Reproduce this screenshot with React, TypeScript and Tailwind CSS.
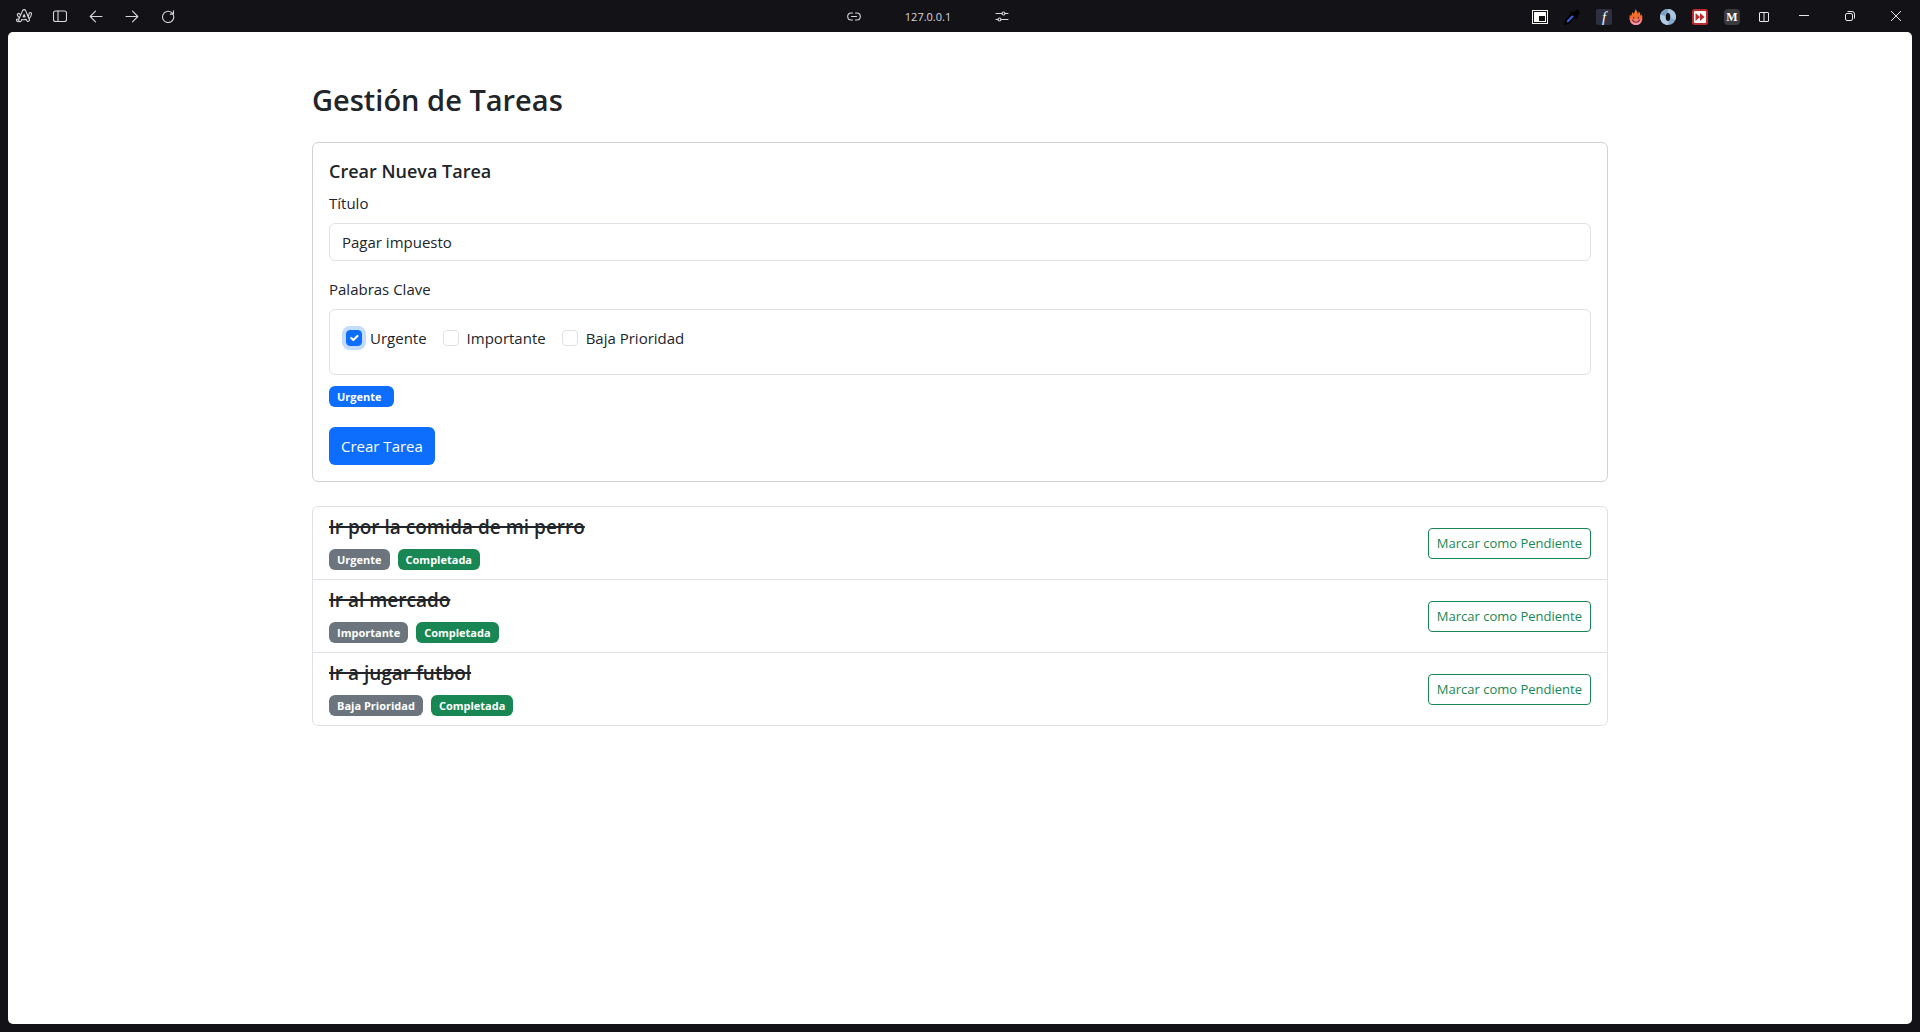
import { useState } from "react";
import type { ReactNode } from "react";

const KEYWORDS = ["Urgente", "Importante", "Baja Prioridad"];

const INITIAL_TASKS = [
  { id: 1, title: "Ir por la comida de mi perro", keyword: "Urgente", done: true },
  { id: 2, title: "Ir al mercado", keyword: "Importante", done: true },
  { id: 3, title: "Ir a jugar futbol", keyword: "Baja Prioridad", done: true },
];

function BarButton({ label, className = "", children }: { label: string; className?: string; children: ReactNode }) {
  return (
    <button type="button" aria-label={label} className={`flex h-8 shrink-0 items-center justify-center ${className}`}>
      {children}
    </button>
  );
}

function ArcLogo() {
  return (
    <svg width="16" height="14" viewBox="0 0 16 14" fill="none" stroke="#d8d7dc" strokeWidth="1.1" strokeLinejoin="round" strokeLinecap="round">
      <path d="M6.600 1.600C7.200.3 9 .3 9.600 1.600l3.700 8.700c.8 2-1.700 3-2.600 1.300l-.6-1.300c-1.300.6-2.800.6-4.200.1l-.6 1.300c-1 1.700-3.400.6-2.600-1.300z" />
      <path d="M3.600 8.600C2.600 7.900 2.100 7.300 1.600 6.600.5 4.900 2.800 3.600 3.900 5.200l.7.900M12.300 7.300c.5-1 .7-1.800.8-2.700.3-1.700 2.600-1.300 2.400.4-.3 1.800-1 3.200-2.200 4.500" />
      <path d="M7.200 7.700 8.100 5.500l1 2.300c-.7.200-1.300.2-1.900-.1zM2.700 10.300c-.8-.3-1.400-.7-2 .1-.6 1 .2 2.300 1.600 2.300" />
    </svg>
  );
}

function BrowserBar() {
  const line = { fill: "none", stroke: "#d8d7dc", strokeWidth: 1.1, strokeLinecap: "round", strokeLinejoin: "round" } as const;
  return (
    <header className="grid h-8 grid-cols-[1fr_auto_1fr] items-center">
      <nav aria-label="Navegación" className="flex items-center pl-1.5">
        <BarButton label="Arc" className="w-9"><ArcLogo /></BarButton>
        <BarButton label="Barra lateral" className="w-9">
          <svg width="14" height="12" viewBox="0 0 14 12" {...line}>
            <rect x=".5" y="1" width="13" height="10.500" rx="2" />
            <path d="M5 1v10.500" />
          </svg>
        </BarButton>
        <BarButton label="Atrás" className="w-9">
          <svg width="14" height="14" viewBox="0 0 14 14" {...line}><path d="M13 7.500H1.500M6.500 2.200 1.200 7.500l5.300 5.300" /></svg>
        </BarButton>
        <BarButton label="Adelante" className="w-9">
          <svg width="14" height="14" viewBox="0 0 14 14" {...line}><path d="M1 7.500h11.500M7.500 2.200l5.300 5.300-5.300 5.300" /></svg>
        </BarButton>
        <BarButton label="Recargar" className="w-9">
          <svg width="14" height="14" viewBox="0 0 14 14" {...line}><path d="M12.500 6.300A5.600 5.600 0 1 1 10.800 3.700l1.500 1.200M12.500 1.800v3.300H9.200" /></svg>
        </BarButton>
      </nav>

      <div className="flex items-center pr-16">
        <BarButton label="Copiar enlace" className="w-4">
          <svg width="14" height="10" viewBox="0 0 14 10" {...line}><path d="M5.500 2h-1.300a3.300 3.300 0 0 0 0 7h1.300M8.500 2h1.300a3.300 3.300 0 0 1 0 7H8.500M4.500 5.500h5" /></svg>
        </BarButton>
        <span className="w-[132px] pt-0.5 text-center text-[11px] font-medium text-[#d8d7dc]">127.0.0.1</span>
        <BarButton label="Ajustes del sitio" className="w-4">
          <svg width="14" height="12" viewBox="0 0 14 12" {...line}>
            <path d="M1 3.500h6M10 3.500h3M1 9.500h2M6 9.500h7" />
            <circle cx="8.500" cy="3.500" r="1.500" />
            <circle cx="4.500" cy="9.500" r="1.500" />
          </svg>
        </BarButton>
      </div>

      <div className="flex items-center justify-end">
        <BarButton label="Imagen en imagen" className="w-8 pt-0.5">
          <svg width="16" height="14" viewBox="0 0 16 14">
            <rect width="16" height="14" fill="#f5f5f5" />
            <rect x="1.500" y="1.500" width="13" height="11" fill="#fff" stroke="#111" />
            <rect x="7" y="6" width="6" height="5" fill="#111" />
          </svg>
        </BarButton>
        <BarButton label="Cuentagotas" className="w-8 pt-0.5">
          <svg width="16" height="16" viewBox="0 0 16 16">
            <path d="M8.500 4.500 2.500 10.500 1.200 14.800l4.300-1.300 6-6z" fill="#3c5bd0" stroke="#000" strokeWidth="1.800" />
            <path d="M7.500 3.500 12.500 8.500M9.500 5 12 2.300c1.500-1.500 3.400.5 2 2L11.500 7z" fill="#000" stroke="#000" strokeWidth="2.500" strokeLinecap="round" />
          </svg>
        </BarButton>
        <BarButton label="Fuentes" className="w-8 pt-0.5">
          <span className="flex size-4 items-center justify-center rounded-xs bg-[#2e3040] font-['Liberation_Serif',serif] text-[15px] leading-none text-white italic">f</span>
        </BarButton>
        <BarButton label="Llama" className="w-8 pt-0.5">
          <svg width="14" height="16" viewBox="0 0 14 16">
            <defs>
              <linearGradient id="flame" x1="0" y1="0" x2="0" y2="1">
                <stop offset="0" stopColor="#ff8a1c" />
                <stop offset=".5" stopColor="#f2662f" />
                <stop offset="1" stopColor="#ff9fc0" />
              </linearGradient>
            </defs>
            <path d="M6.500 0C8 2 8.500 3.500 8.800 5c.7-.6 1-1.500 1-2.500C11.500 4 11.300 5.500 11.700 7c.5-.4.8-1 .9-1.700C13.500 7 13.500 9 13.200 11c-.6 3-3 5-6.200 5S1.200 14 .7 11C.4 9 .5 7 1 5.500c.4.800.8 1.200 1.300 1.500C2.400 5.500 3 4 4 3c0 .8.200 1.500.6 2C5.500 3.600 6.300 2 6.500 0z" fill="url(#flame)" />
            <path d="M4.700 8.300v1M9.300 8.300v1M3.500 11c1.500 3 5.500 3 7 0" fill="none" stroke="#6b2a3d" strokeWidth="1.100" strokeLinecap="round" />
          </svg>
        </BarButton>
        <BarButton label="Anillo" className="w-8 pt-0.5">
          <svg width="16" height="16" viewBox="0 0 16 16">
            <circle cx="8" cy="8" r="8" fill="#86a9c9" />
            <path d="M8 0a8 8 0 0 1 7.500 10.500L10.500 9C11 6 10 4 7 3.500z" fill="#a9c6de" />
            <path d="M8 16A8 8 0 0 1 .5 5.500L5.500 7C5 10 6 12 9 12.500z" fill="#b2cce0" />
            <path d="M8 0A8 8 0 0 0 .5 5.500l5 1.500C6 5 7 4 8 4z" fill="#7fa3c4" />
            <ellipse cx="8" cy="8" rx="2.200" ry="4" fill="#131217" />
          </svg>
        </BarButton>
        <BarButton label="Avance rápido" className="w-8 pt-0.5">
          <svg width="16" height="16" viewBox="0 0 16 16">
            <rect width="16" height="16" rx="2.500" fill="#bf2a2c" />
            <rect x="2" y="2" width="12" height="12" rx="1" fill="#fff" />
            <path d="m3.500 4 4.500 4-4.500 4zM8 4l4.500 4L8 12z" fill="#bf2a2c" />
          </svg>
        </BarButton>
        <BarButton label="Medium" className="w-8 pt-0.5">
          <span className="flex size-4 items-center justify-center rounded-sm bg-[#3b3b3e] font-['Liberation_Serif',serif] text-[12px] leading-none font-bold text-white">M</span>
        </BarButton>
        <BarButton label="Vista dividida" className="w-8 pt-0.5">
          <svg width="10" height="10" viewBox="0 0 10 10" fill="none" stroke="#e8e8ea"><rect x=".5" y=".5" width="9" height="9" rx=".5" /><path d="M5 0v10" /></svg>
        </BarButton>
        <BarButton label="Minimizar" className="w-12">
          <svg width="10" height="10" viewBox="0 0 10 10" fill="none" stroke="#e8e8ea"><path d="M0 4.500h10" /></svg>
        </BarButton>
        <BarButton label="Restaurar" className="w-11">
          <svg width="10" height="10" viewBox="0 0 10 10" fill="none" stroke="#e8e8ea"><rect x=".5" y="2.500" width="7" height="7" rx="1.500" /><path d="M2.500.5H7A2.500 2.500 0 0 1 9.500 3v4.500" /></svg>
        </BarButton>
        <BarButton label="Cerrar" className="w-12">
          <svg width="10" height="10" viewBox="0 0 10 10" fill="none" stroke="#e8e8ea"><path d="m0 0 10 10M10 0 0 10" /></svg>
        </BarButton>
      </div>
    </header>
  );
}

function Badge({ className, children }: { className: string; children: ReactNode }) {
  return <span className={`inline-block h-[21px] rounded-md text-[11px] leading-[22px] font-bold text-white ${className}`}>{children}</span>;
}

function KeywordCheck({ name, checked, onChange }: { name: string; checked: boolean; onChange: () => void }) {
  return (
    <label className="flex h-6 items-center gap-2">
      <span className="grid size-4 place-items-center">
        <input
          type="checkbox"
          checked={checked}
          onChange={onChange}
          className="col-start-1 row-start-1 size-4 appearance-none rounded border border-[#dee2e6] bg-white checked:border-[#0d6efd] checked:bg-[#0d6efd] checked:ring-4 checked:ring-[#0d6efd]/25"
        />
        {checked && (
          <svg viewBox="0 0 20 20" className="pointer-events-none col-start-1 row-start-1 size-3.5" fill="none" stroke="#fff" strokeWidth="3" strokeLinecap="round" strokeLinejoin="round">
            <path d="m6 10 3 3 6-6" />
          </svg>
        )}
      </span>
      {name}
    </label>
  );
}

export default function App() {
  const [title, setTitle] = useState("Pagar impuesto");
  const [selected, setSelected] = useState<string[]>(["Urgente"]);
  const [tasks, setTasks] = useState(INITIAL_TASKS);

  const toggleKeyword = (name: string) =>
    setSelected((list) => (list.includes(name) ? list.filter((k) => k !== name) : [...list, name]));
  const toggleTask = (id: number) =>
    setTasks((list) => list.map((t) => (t.id === id ? { ...t, done: !t.done } : t)));

  return (
    <div className="flex min-h-screen flex-col bg-[#131217] pb-2 font-['Open_Sans',sans-serif] text-[15px] leading-6 text-[#212529]">
      <BrowserBar />
      <main className="mx-2 grow rounded-[5px] bg-white">
        <div className="mx-auto max-w-[1320px] px-3 pt-12">
          <h1 className="mb-[22px] text-[29px] leading-10 font-semibold">Gestión de Tareas</h1>

          <form onSubmit={(e) => e.preventDefault()} className="mb-6 rounded-md border border-[#d2d2d2] p-4">
            <h2 className="mb-2 text-[18px] leading-6 font-semibold">Crear Nueva Tarea</h2>
            <label htmlFor="title" className="mb-2 block">Título</label>
            <input
              id="title"
              type="text"
              value={title}
              onChange={(e) => setTitle(e.target.value)}
              className="mb-4 block h-[38px] w-full rounded-md border border-[#dee2e6] px-3"
            />
            <fieldset>
              <legend className="mb-2">Palabras Clave</legend>
              <div className="flex flex-wrap gap-4 rounded-md border border-[#dee2e6] px-4 pt-4 pb-6">
                {KEYWORDS.map((name) => (
                  <KeywordCheck key={name} name={name} checked={selected.includes(name)} onChange={() => toggleKeyword(name)} />
                ))}
              </div>
            </fieldset>
            <div className="mt-[11px] mb-5 flex gap-1">
              {selected.map((name) => (
                <Badge key={name} className="bg-[#0d6efd] pr-3 pl-2">{name}</Badge>
              ))}
            </div>
            <button type="submit" className="block h-[38px] rounded-md bg-[#0d6efd] px-3 text-white">Crear Tarea</button>
          </form>

          <ul className="divide-y divide-[#dee2e6] rounded-md border border-[#dee2e6]">
            {tasks.map((task) => (
              <li key={task.id} className="flex items-center justify-between px-4 py-2">
                <div>
                  <h3 className={`mb-2 text-[19px] leading-6 font-semibold decoration-2 ${task.done ? "line-through" : ""}`}>{task.title}</h3>
                  <div className="flex h-6 items-center gap-2">
                    <Badge className="bg-[#6c757d] px-2">{task.keyword}</Badge>
                    {task.done && <Badge className="bg-[#198754] px-2">Completada</Badge>}
                  </div>
                </div>
                <button
                  type="button"
                  onClick={() => toggleTask(task.id)}
                  className="h-[31px] rounded border border-[#198754] px-2 text-[13px] text-[#198754]"
                >
                  {task.done ? "Marcar como Pendiente" : "Marcar como Completada"}
                </button>
              </li>
            ))}
          </ul>
        </div>
      </main>
    </div>
  );
}
